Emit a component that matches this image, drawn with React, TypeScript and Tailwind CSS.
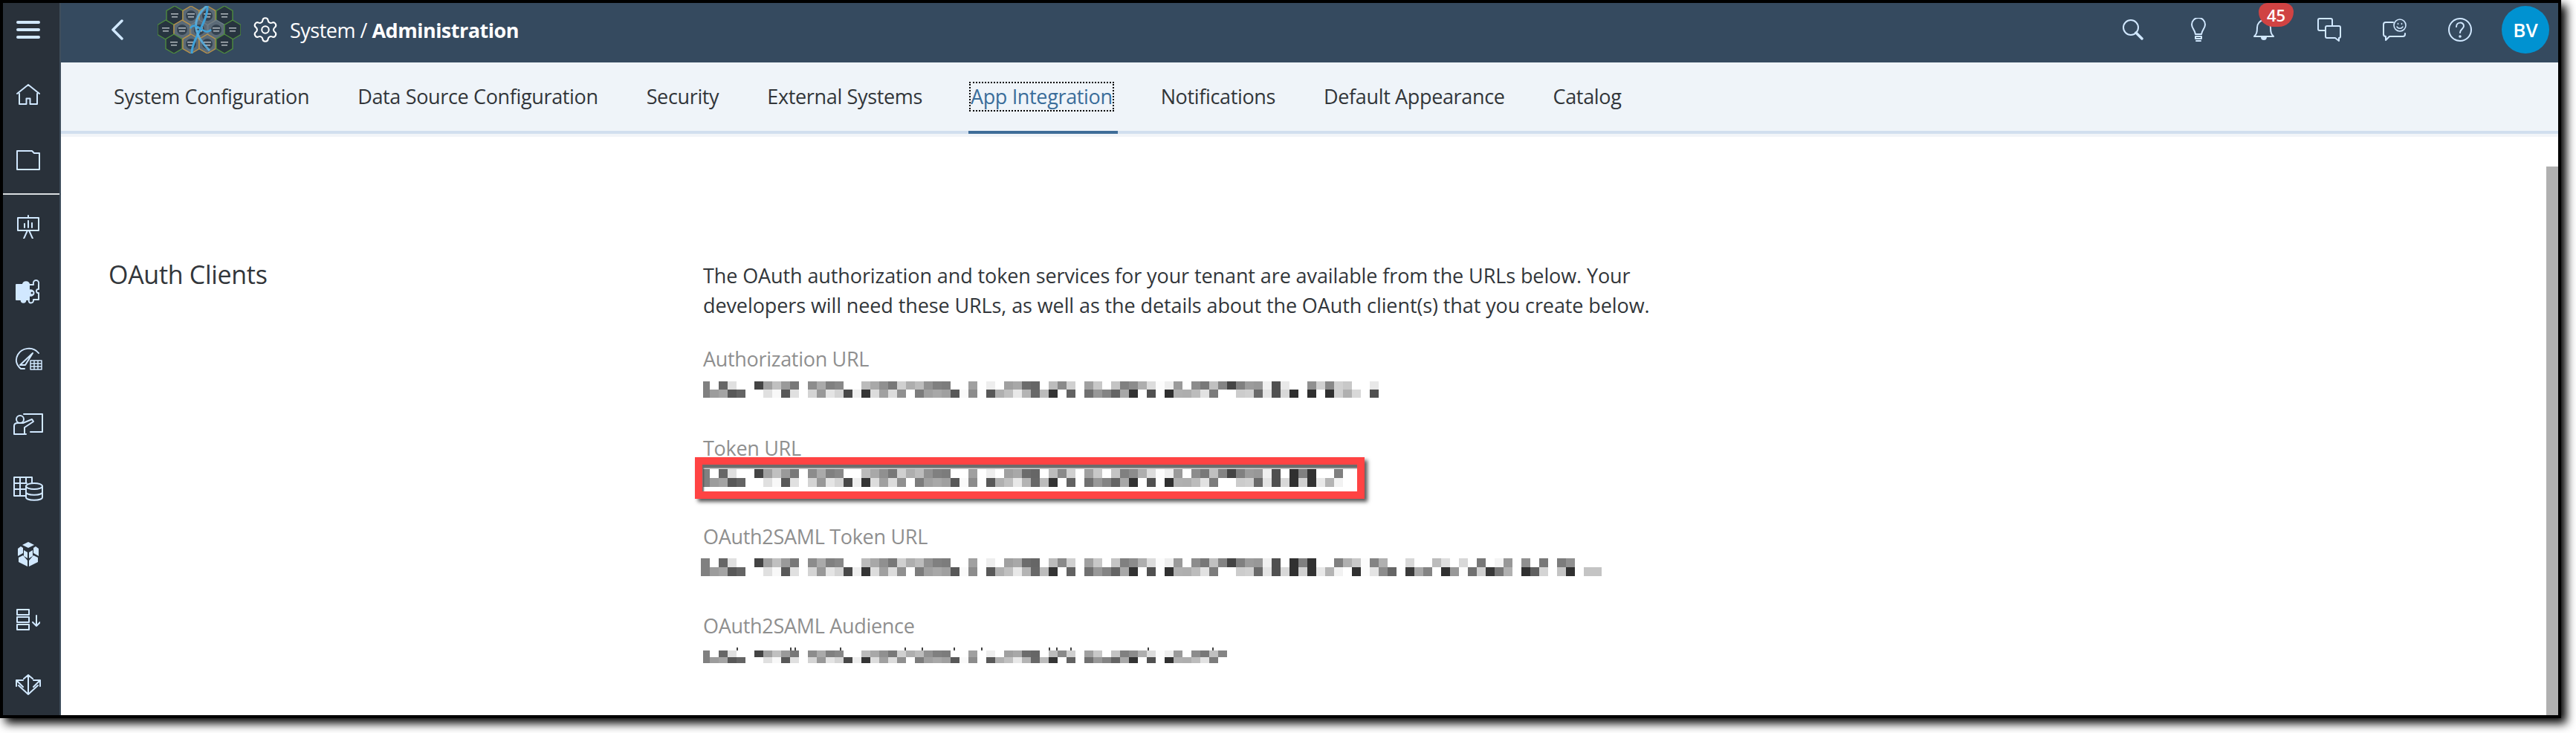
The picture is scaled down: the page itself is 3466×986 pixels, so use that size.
import { Settings } from 'lucide-react';

const FONT = "font-['Open_Sans','Noto_Sans',sans-serif]";

// pixelated url blocks, one hex grey per 12px cell
const TOP =
  '80 ff 66 e0 ff ff 44 a0 c0 9a 78 ff 8c aa 80 88 ff ff bb a8 90 78 d0 ae bc 92 80 7c ff ff a0 ff ee ff a0 a8 6c 66 ff bc 8a d0 ff a0 c8 ff c4 80 8c ae dc fc ee 9a ff 8c 78 c0 84 44 80 9c 98 f0 50 ff 30 80 32 ff ff 80 b0 c8 fc 84 b0 ff ff d8 ff ff bc de ff d8 ff 78 ff f4 98 ff 90 ff 78 ff 7c 90 ff ff ff'.split(' ');
const BOTTOM =
  '80 9c a4 58 64 ff ff e0 f8 58 e0 ff d4 98 e4 d4 48 ee 34 dc a0 dc 90 ff 7c a0 a8 a0 58 fa 8c ff 58 b0 c0 e8 b4 68 bc 34 ff 62 ff 70 98 84 64 a8 32 ff 50 ff 30 b0 ae bc e2 7c ff ff cc d0 6a e4 50 d8 30 d0 32 e8 b4 f2 ff 30 fc e4 8c 66 ff 3a a8 84 ff 30 98 fc 70 d0 38 78 b0 ff 30 60 d4 ff c4 30 ff c4 c4'.split(' ');

const AUTH_TOP = [...TOP.slice(0, 64), ...'50 e8 ff ff 90 d0 88 d0 c8 ff ff e8'.split(' ')];
const AUTH_BOTTOM = [...BOTTOM.slice(0, 64), ...'50 d8 30 ff 30 ff 30 d0 b0 d8 ff 50'.split(' ')];

// stray glyph tops that survive above the audience block
const AUDIENCE_TICKS = [48, 120, 126, 187, 274, 297, 340, 377, 468, 478, 497, 601, 688];

function Pixelated({ top, bottom, rowH, clip = 0, ticks = [] }: { top: string[]; bottom: string[]; rowH: number; clip?: number; ticks?: number[] }) {
  const pad = ticks.length ? 4 : 0;
  const w = top.length * 12 - clip;
  return (
    <svg width={w} height={rowH * 2 + pad} viewBox={`${clip} ${-pad} ${w} ${rowH * 2 + pad}`} shapeRendering="crispEdges" className="block">
      {ticks.map((x) => (
        <rect key={x} x={x - 3 + clip} y={-pad} width={2} height={pad} fill="#444444" />
      ))}
      {top.map((c, i) => (
        <rect key={`t${i}`} x={i * 12} y={0} width={12} height={rowH} fill={`#${c}${c}${c}`} />
      ))}
      {bottom.map((c, i) => (
        <rect key={`b${i}`} x={i * 12} y={rowH} width={12} height={rowH} fill={`#${c}${c}${c}`} />
      ))}
    </svg>
  );
}

function Icon({ w, h, fill = 'none', sw = 2, children }: { w: number; h: number; fill?: string; sw?: number; children: React.ReactNode }) {
  return (
    <svg width={w} height={h} viewBox={`0 0 ${w} ${h}`} fill={fill} stroke="#d1e8ff" strokeWidth={sw} strokeLinecap="round" strokeLinejoin="round">
      {children}
    </svg>
  );
}

const hexes = [
  [235, 21, 'g'], [257, 21, 'o'], [279, 21, 'o'], [302, 21, 'g'],
  [223, 40, 'g'], [245, 40, 'o'], [268, 40, 'm'], [291, 40, 'm'], [313, 40, 'g'],
  [234, 59, 'g'], [257, 59, 'o'], [279, 59, 'o'], [302, 59, 'g'],
] as const;

function Logo() {
  return (
    <svg width={112} height={64} viewBox="212 8 112 64">
      {hexes.map(([x, y, k], i) => (
        <g key={i}>
          <polygon
            points={`${x},${y - 13} ${x + 11},${y - 6.5} ${x + 11},${y + 6.5} ${x},${y + 13} ${x - 11},${y + 6.5} ${x - 11},${y - 6.5}`}
            fill={k === 'g' ? '#27343f' : '#5b6a77'}
            stroke={k === 'g' ? '#4e8a3e' : k === 'o' ? '#b8924a' : '#6d7d8a'}
            strokeWidth={1.4}
          />
          {k !== 'g' && <circle cx={x} cy={y} r={7} fill="#34424f" />}
          <rect x={x - 5} y={y - 3} width={10} height={1.5} fill="#d5dadf" opacity={0.8} />
          <rect x={x - 4} y={y + 1} width={8} height={1.5} fill="#d5dadf" opacity={0.8} />
        </g>
      ))}
      <path d="M258 72 C258 52 280 30 279 8" fill="none" stroke="#3ea1d8" strokeWidth={3} />
      <path d="M278 8 C258 26 258 44 282 68" fill="none" stroke="#59b4e6" strokeWidth={3} opacity={0.85} />
      <path d="M256 38 C264 26 274 50 284 40" fill="none" stroke="#3ea1d8" strokeWidth={2.5} />
    </svg>
  );
}

const sideIcons = [
  // presentation
  <Icon w={32} h={32} key="p">
    <path d="M16 1v3M2 4h28v17H2zM10 32l5-11M22 32l-5-11M11 17v-5M16 17V8M21 17v-6" />
  </Icon>,
  // puzzle
  <Icon w={34} h={34} key="z">
    <path d="M1 7h9c-1-5 9-5 8 0h0v8c3-2 6 0 6 3s-3 5-6 3v6h-5c2 5-7 5-5 0H1z" fill="#d1e8ff" />
    <path d="M18 7h6c-2-8 9-8 7 0v6c-4-1-4 6 0 5v9h-7c1 6-8 6-6 0" />
    <circle cx={22} cy={18} r={2.5} fill="#29313a" />
  </Icon>,
  // gauge with table
  <Icon w={37} h={33} key="g">
    <path d="M13 31H8C2 26 0 19 4 12 9 3 24 0 32 10" />
    <path d="M7 26 24 10 14 26z" />
    <path d="M21 20h15v12H21zM21 24h15M21 28h15M26 20v12M31 20v12" strokeWidth={1.5} />
  </Icon>,
  // training
  <Icon w={40} h={34} key="t">
    <path d="M14 5h25v24H23" />
    <circle cx={9} cy={12} r={5} />
    <path d="M1 32V21c0-3 2-4 5-4h7l12-5 2 3-12 8v9zM1 32h16" />
  </Icon>,
  // table and database
  <Icon w={40} h={33} key="d">
    <path d="M16 26H1V1h24v7M1 9h17M1 17h15M9 1v25M17 1v8" />
    <ellipse cx={28} cy={13} rx={11} ry={4} />
    <path d="M17 13v15c0 5 22 5 22 0V13M17 21c0 5 22 5 22 0" />
  </Icon>,
  // cube
  <Icon w={28} h={33} fill="#d1e8ff" sw={0} key="c">
    <path d="M14 0l8 4-8 4-8-4zM4 6l3 2v7l-7 4V9zM24 6l4 3v10l-7-4V8zM8 11l5 3v8l-5-3zM20 11v8l-5 3v-8zM1 21l6-3 6 7v8L1 27zM27 21v6l-12 6v-8l6-7z" />
  </Icon>,
  // rows with arrow
  <Icon w={32} h={29} key="l">
    <path d="M1 1h16v7H1zM1 11h16v7H1zM1 21h16v7H1zM27 9v14M22 18l5 5 5-5" />
  </Icon>,
  // expand arrows
  <Icon w={34} h={28} key="a">
    <path d="M17 1v26M11 6l6-5 6 5M1 8l9 9M1 8h9M1 8v8M33 8l-9 9M33 8h-9M33 8v8M4 15l13 12 13-12" />
  </Icon>,
];

const tabs = [
  { label: 'System Configuration' },
  { label: 'Data Source Configuration' },
  { label: 'Security' },
  { label: 'External Systems' },
  { label: 'App Integration', active: true },
  { label: 'Notifications' },
  { label: 'Default Appearance' },
  { label: 'Catalog' },
];

export default function App() {
  return (
    <div className={`h-[986px] w-[3466px] overflow-hidden bg-white ${FONT}`}>
      <div className="flex h-[966px] w-[3446px] border-4 border-black shadow-[7px_7px_12px_#000]">
        {/* Sidebar */}
        <aside className="flex h-full w-[78px] shrink-0 flex-col border-r-2 border-[#3f4e5c] bg-[#29313a] pr-[8px]">
          <div className="flex h-[72px] shrink-0 items-center justify-center">
            <Icon w={32} h={24} sw={4}>
              <path d="M2 2h28M2 12h28M2 22h28" />
            </Icon>
          </div>
          <div className="flex h-[88px] shrink-0 items-center justify-center pt-[14px]">
            <Icon w={32} h={28}>
              <path d="M1 13 16 1l15 12M4 13v14h9.500v-7.500h5V27H28V13" />
            </Icon>
          </div>
          <div className="flex h-[96px] shrink-0 items-center justify-center pt-[6px]">
            <Icon w={32} h={29}>
              <path d="M1 27V2h20l3 3h7v22z" />
            </Icon>
          </div>
          <div className="-mr-[8px] h-[2px] shrink-0 bg-[#d9dde0]" />
          <div className="-mt-[1px] flex flex-col">
            {sideIcons.map((icon, i) => (
              <div key={i} className="flex h-[88px] items-center justify-center">
                {icon}
              </div>
            ))}
          </div>
        </aside>

        <div className="flex min-w-0 flex-1 flex-col">
          {/* Header */}
          <header className="flex h-[80px] shrink-0 items-center bg-[#354a5f] pb-[8px] pl-[68px]">
            <svg width={16} height={28} viewBox="0 0 16 28" fill="none" stroke="#d1e8ff" strokeWidth={3.500} strokeLinecap="round" strokeLinejoin="round">
              <path d="M14 2 2 14l12 12" />
            </svg>
            <div className="ml-[46px] flex">
              <Logo />
            </div>
            <Settings size={38} strokeWidth={1.3} className="ml-[14px] text-white" />
            <div className="ml-[14px] text-[27px] leading-none tracking-[-0.5px] text-white">
              System / <span className="font-bold">Administration</span>
            </div>
            <div className="ml-auto flex items-center">
              <div className="flex h-[72px] w-[88px] items-center justify-center">
                <Icon w={28} h={28} sw={2}>
                  <circle cx={11} cy={11} r={10} />
                  <path d="m18 18 8 8" strokeWidth={3.500} />
                </Icon>
              </div>
              <div className="flex h-[72px] w-[88px] items-center justify-center">
                <Icon w={20} h={32}>
                  <path d="M6 22C5 16 1 14 1 9a9 9 0 0 1 18 0c0 5-4 7-5 13zM6 25h8v3H6zM7 31h6" />
                </Icon>
              </div>
              <div className="relative flex h-[72px] w-[88px] items-center justify-center">
                <Icon w={28} h={30}>
                  <path d="M1 24c3-3 4-5 4-12C5 7 9 2 14 2s9 5 9 10c0 7 1 9 4 12z" />
                  <path d="M11 25a3 3 0 0 0 6 0z" fill="#d1e8ff" />
                </Icon>
                <div className="absolute left-[37px] top-0 flex h-[32px] w-[47px] items-center justify-center rounded-b-[20px] rounded-t-[12px] bg-[#d04343] text-[22px] font-semibold leading-none text-white">
                  45
                </div>
              </div>
              <div className="flex h-[72px] w-[88px] items-center justify-center">
                <Icon w={32} h={32}>
                  <path d="M10 17H3a2 2 0 0 1-2-2V3a2 2 0 0 1 2-2h15a2 2 0 0 1 2 2v7" />
                  <path d="M13 11h16a2 2 0 0 1 2 2v12a2 2 0 0 1-2 2v4l-5-4H13a2 2 0 0 1-2-2V13a2 2 0 0 1 2-2z" />
                </Icon>
              </div>
              <div className="flex h-[72px] w-[88px] items-center justify-center">
                <Icon w={32} h={30}>
                  <path d="M14 5H4a3 3 0 0 0-3 3v13a3 3 0 0 0 3 3v5l5-5h18a3 3 0 0 0 3-3v-1" />
                  <circle cx={23} cy={9} r={8} strokeWidth={1.6} />
                  <path d="M19 11c2 3 6 3 8 0M20.500 6.500v1M25.500 6.500v1" strokeWidth={1.5} />
                </Icon>
              </div>
              <div className="flex h-[72px] w-[88px] items-center justify-center">
                <Icon w={32} h={32}>
                  <circle cx={16} cy={16} r={15} />
                  <path d="M11 12c0-7 10-7 10-1 0 4-5 4-5 9" />
                  <circle cx={16} cy={25} r={0.8} fill="#d1e8ff" />
                </Icon>
              </div>
              <div className="flex h-[72px] w-[88px] items-center justify-center">
                <div className="flex h-[64px] w-[64px] items-center justify-center rounded-full bg-[#0092d1] text-[26px] font-semibold text-white">
                  BV
                </div>
              </div>
            </div>
          </header>

          {/* Tabs */}
          <nav className="flex h-[92px] shrink-0 items-stretch gap-[55px] bg-[#eff4f9] pl-[66px]">
            {tabs.map((t) => (
              <div key={t.label} className="flex items-center px-[5px]">
                <span className={`text-[27px] leading-[36px] tracking-[-0.35px] ${t.active ? 'text-[#3a6d9a] outline-2 outline-dotted outline-black' : 'text-[#32363a]'}`}>
                  {t.label}
                </span>
              </div>
            ))}
          </nav>
          <div className="flex h-[4px] shrink-0 bg-[#d1dfee] pl-[1221px]">
            <div className="h-full w-[201px] bg-[#3f6d98]" />
          </div>
          <div className="h-[4px] shrink-0 bg-[#f1f4f8]" />

          {/* Main */}
          <main className="flex min-h-0 flex-1 overflow-hidden bg-white">
            <div className="flex min-w-0 flex-1 pl-[64px] pt-[167px]">
              <h2 className="-mt-[2px] w-[800px] shrink-0 text-[34px] font-normal leading-[40px] tracking-[-0.3px] text-[#32363a]">OAuth Clients</h2>
              <div>
                <p className="text-[27px] leading-[40px] tracking-[-0.1px] text-[#32363a]">
                  The OAuth authorization and token services for your tenant are available from the URLs below. Your
                  <br />
                  developers will need these URLs, as well as the details about the OAuth client(s) that you create below.
                </p>

                <div className="mt-[32px] text-[27px] leading-[40px] tracking-[-0.3px] text-[#8f8f8f]">Authorization URL</div>
                <div className="mt-[10px]">
                  <Pixelated top={AUTH_TOP} bottom={AUTH_BOTTOM} rowH={11} clip={3} />
                </div>

                <div className="mt-[48px] text-[27px] leading-[40px] tracking-[-0.3px] text-[#8f8f8f]">Token URL</div>
                <div className="relative mt-[8px] w-fit">
                  <Pixelated top={TOP.slice(0, 72)} bottom={BOTTOM.slice(0, 72)} rowH={12} clip={3} />
                  <div className="absolute left-[-11px] top-[-16px] h-[56px] w-[901px] border-[10px] border-[#ff4343] shadow-[4px_4px_5px_rgba(0,0,0,0.65),inset_2px_5px_2px_rgba(70,70,70,0.8)]" />
                </div>

                <div className="mt-[47px] text-[27px] leading-[40px] tracking-[-0.3px] text-[#8f8f8f]">OAuth2SAML Token URL</div>
                <div className="-ml-[3px] mt-[9px]">
                  <Pixelated top={TOP} bottom={BOTTOM} rowH={12} />
                </div>

                <div className="mt-[47px] text-[27px] leading-[40px] tracking-[-0.3px] text-[#8f8f8f]">OAuth2SAML Audience</div>
                <div className="mt-[9px]">
                  <Pixelated top={TOP.slice(0, 59)} bottom={BOTTOM.slice(0, 59)} rowH={8.5} clip={3} ticks={AUDIENCE_TICKS} />
                </div>
              </div>
            </div>
            <div className="mt-[40px] h-full w-[16px] shrink-0 bg-[#b0b0b0]" />
          </main>
        </div>
      </div>
    </div>
  );
}
